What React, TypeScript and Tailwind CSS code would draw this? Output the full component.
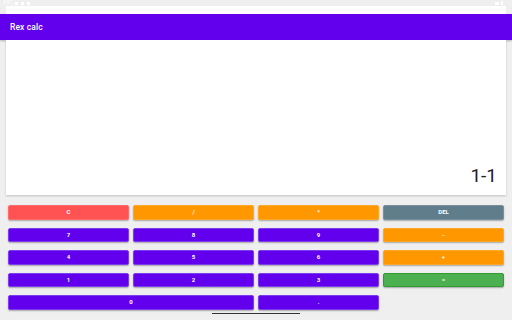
import React from 'react';

type Key = {
  label: string;
  color: string;
  span?: boolean;
};

const keys: Key[] = [
  { label: 'C', color: 'bg-[#ff5252] border-[#ff6b6b]' },
  { label: '/', color: 'bg-[#ff9800] border-[#ffa726]' },
  { label: '*', color: 'bg-[#ff9800] border-[#ffa726]' },
  { label: 'DEL', color: 'bg-[#607d8b] border-[#78909c]' },
  { label: '7', color: 'bg-[#6200ee] border-[#7c3cf0]' },
  { label: '8', color: 'bg-[#6200ee] border-[#7c3cf0]' },
  { label: '9', color: 'bg-[#6200ee] border-[#7c3cf0]' },
  { label: '-', color: 'bg-[#ff9800] border-[#ffa726]' },
  { label: '4', color: 'bg-[#6200ee] border-[#7c3cf0]' },
  { label: '5', color: 'bg-[#6200ee] border-[#7c3cf0]' },
  { label: '6', color: 'bg-[#6200ee] border-[#7c3cf0]' },
  { label: '+', color: 'bg-[#ff9800] border-[#ffa726]' },
  { label: '1', color: 'bg-[#6200ee] border-[#7c3cf0]' },
  { label: '2', color: 'bg-[#6200ee] border-[#7c3cf0]' },
  { label: '3', color: 'bg-[#6200ee] border-[#7c3cf0]' },
  { label: '=', color: 'bg-[#4caf50] border-[#2e9d33]' },
  { label: '0', color: 'bg-[#6200ee] border-[#7c3cf0]', span: true },
  { label: '.', color: 'bg-[#6200ee] border-[#7c3cf0]' },
];

const App: React.FC = () => {
  return (
    <div className="relative w-[512px] h-[320px] overflow-hidden bg-[#efefef] font-['Roboto',sans-serif]">
      {/* status bar */}
      <div className="h-[6px] flex items-center justify-between px-[3px] text-white text-[4.5px] leading-none">
        <div className="flex items-center gap-[3px]">
          <span>3:47</span>
          <span className="w-[3px] h-[3px] bg-white" />
          <span className="w-[3px] h-[3px] bg-white" />
          <span className="w-[3px] h-[3px] bg-white" />
        </div>
        <div className="flex items-center gap-[2px] pr-[6px]">
          <span className="w-[4px] h-[3px] bg-white" />
          <span className="w-[2px] h-[4px] bg-white" />
        </div>
      </div>

      <div className="mx-[6px] h-[8px] bg-white" />

      <header className="h-[26px] bg-[#6200ee] flex items-center px-[10px] shadow-[0_1px_2px_rgba(0,0,0,0.25)]">
        <span className="text-white text-[8.5px] font-medium tracking-[0.1px]">Rex calc</span>
      </header>

      <div className="mx-[6px] h-[155px] bg-white flex items-end justify-end pr-[9px] pb-[7px] shadow-[0_1px_2px_rgba(0,0,0,0.2)]">
        <span className="text-[19px] leading-[24px] text-[#222]">1-1</span>
      </div>

      <div className="mt-[10px] px-[8px] grid grid-cols-4 auto-rows-[14.5px] gap-x-[4px] gap-y-[8px]">
        {keys.map((k) => (
          <button
            key={k.label}
            className={`${k.color} ${k.span ? 'col-span-2' : ''} border rounded-[2px] flex items-center justify-center text-white text-[6px] font-bold leading-none shadow-[0_1px_1.5px_rgba(0,0,0,0.3)]`}
          >
            {k.label}
          </button>
        ))}
      </div>

      <div className="absolute left-[212px] top-[313px] w-[88px] h-[1px] bg-[#333]" />
    </div>
  );
};

export default App;
